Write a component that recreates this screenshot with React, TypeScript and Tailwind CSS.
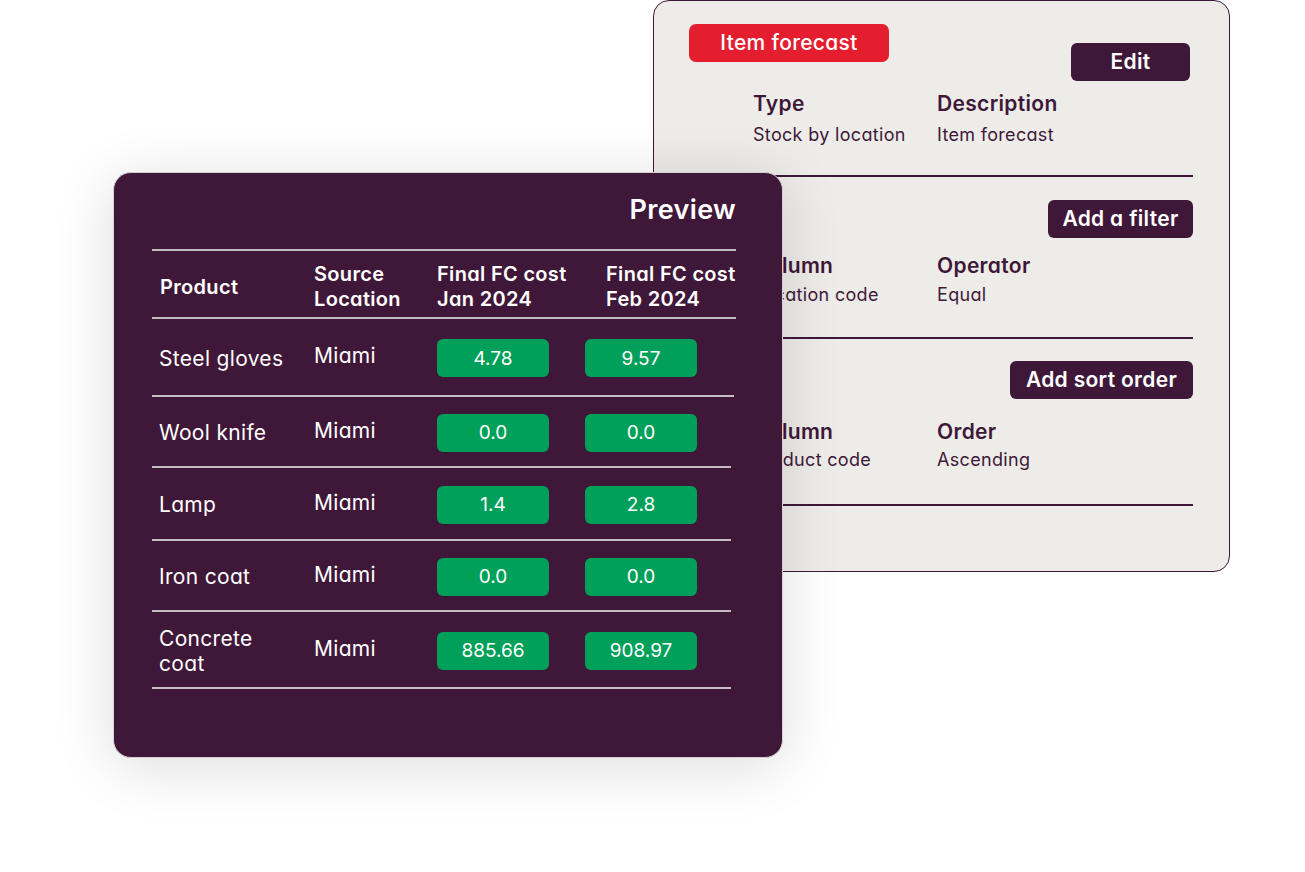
import React from 'react';

const rows = [
  { product: ['Steel gloves'], jan: '4.78', feb: '9.57', h: 'h-[76px]', line: 'w-[582px]' },
  { product: ['Wool knife'], jan: '0.0', feb: '0.0', h: 'h-[69px]', line: 'w-[579px]' },
  { product: ['Lamp'], jan: '1.4', feb: '2.8', h: 'h-[71px]', line: 'w-[579px]' },
  { product: ['Iron coat'], jan: '0.0', feb: '0.0', h: 'h-[69px]', line: 'w-[579px]' },
  { product: ['Concrete', 'coat'], jan: '885.66', feb: '908.97', h: 'h-[75px]', line: 'w-[579px]' },
];

function Field({ label, value, gap }: { label: string; value: string; gap: string }) {
  return (
    <div>
      <div className="text-[21px] leading-[28px] font-semibold">{label}</div>
      <div className={`text-[18px] leading-[24px] ${gap}`}>{value}</div>
    </div>
  );
}

function DarkButton({ label, width }: { label: string; width: string }) {
  return (
    <div
      className={`${width} h-[38px] rounded-[6px] bg-[#3f1839] text-white text-[21px] font-semibold flex items-center justify-center`}
    >
      {label}
    </div>
  );
}

function Pill({ value }: { value: string }) {
  return (
    <div className="w-[112px] h-[38px] rounded-[6px] bg-[#00a05a] text-white text-[19px] tracking-normal flex items-center justify-center">
      {value}
    </div>
  );
}

function SettingsCard() {
  return (
    <div className="ml-[653px] w-[577px] h-[572px] rounded-[16px] border border-[#3f1839] bg-[#edece8] text-[#3f1839] pl-[35px] pr-[36px] pt-[23px]">
      {/* header */}
      <div className="flex justify-between items-start">
        <div className="w-[200px] h-[38px] rounded-[7px] bg-[#e41e2e] text-white text-[21px] font-medium flex items-center justify-center">
          Item forecast
        </div>
        <div className="mt-[19px] mr-[3px]">
          <DarkButton label="Edit" width="w-[119px]" />
        </div>
      </div>
      <div className="mt-[9px] pl-[64px] grid grid-cols-[184px_1fr]">
        <Field label="Type" value="Stock by location" gap="mt-[5px]" />
        <Field label="Description" value="Item forecast" gap="mt-[5px]" />
      </div>
      <div className="mt-[28px] h-[2px] bg-[#3f1839]" />

      {/* filter */}
      <div className="mt-[23px] flex justify-end">
        <DarkButton label="Add a filter" width="w-[145px]" />
      </div>
      <div className="mt-[14px] pl-[64px] grid grid-cols-[184px_1fr]">
        <Field label="Column" value="Location code" gap="mt-[3px]" />
        <Field label="Operator" value="Equal" gap="mt-[3px]" />
      </div>
      <div className="mt-[30px] h-[2px] bg-[#3f1839]" />

      {/* sort */}
      <div className="mt-[22px] flex justify-end">
        <DarkButton label="Add sort order" width="w-[183px]" />
      </div>
      <div className="mt-[19px] pl-[64px] grid grid-cols-[184px_1fr]">
        <Field label="Column" value="Product code" gap="mt-[2px]" />
        <Field label="Order" value="Ascending" gap="mt-[2px]" />
      </div>
      <div className="mt-[32px] h-[2px] bg-[#3f1839]" />
    </div>
  );
}

function PreviewCard() {
  return (
    <div className="absolute left-[113px] top-[172px] w-[670px] h-[586px] rounded-[18px] bg-[#3f1839] border border-[#d6cfd3] text-white pl-[38px] pt-[19px] shadow-[0_8px_60px_rgba(0,0,0,0.14)]">
      <div className="w-[584px]">
        <div className="text-right text-[27px] leading-[36px] font-semibold">Preview</div>
        <div className="mt-[21px] h-[2px] bg-[#c5bdbf]" />
        <div className="h-[66px] pt-[6px] flex items-center text-[20px] leading-[25px] font-semibold">
          <div className="w-[162px] pl-[8px]">Product</div>
          <div className="w-[123px]">
            Source
            <br />
            Location
          </div>
          <div className="w-[148px] whitespace-nowrap">
            Final FC cost
            <br />
            Jan 2024
          </div>
          <div className="pl-[21px] whitespace-nowrap">
            Final FC cost
            <br />
            Feb 2024
          </div>
        </div>
        <div className="h-[2px] bg-[#c5bdbf]" />
        {rows.map((r, i) => (
          <div key={i}>
            <div className={`${r.h} pt-[2px] flex items-center text-[21px] leading-[25px]`}>
              <div className="w-[162px] pl-[7px]">
                {r.product.map((p, j) => (
                  <div key={j}>{p}</div>
                ))}
              </div>
              <div className="w-[123px] -mt-[5px]">Miami</div>
              <div className="w-[148px]">
                <Pill value={r.jan} />
              </div>
              <Pill value={r.feb} />
            </div>
            <div className={`${r.line} h-[2px] bg-[#c5bdbf]`} />
          </div>
        ))}
      </div>
    </div>
  );
}

export default function App() {
  return (
    <div className="relative w-[1305px] h-[872px] overflow-hidden bg-white font-['Inter',sans-serif] tracking-[0.02em] [font-feature-settings:'cv11']">
      <SettingsCard />
      <PreviewCard />
    </div>
  );
}
